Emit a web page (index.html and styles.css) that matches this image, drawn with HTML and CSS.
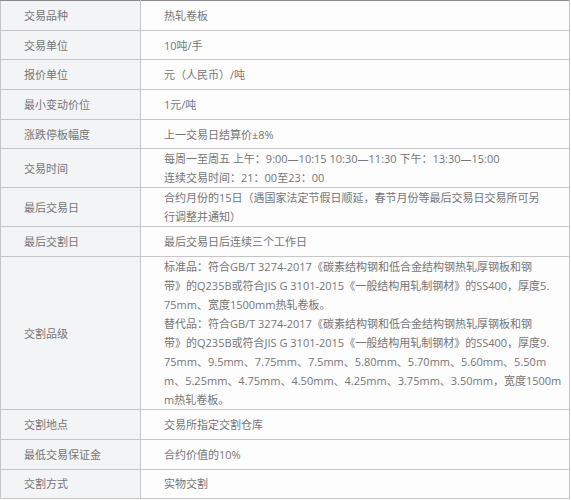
FILE: index.html
```html
<!DOCTYPE html>
<html lang="zh-CN">
<head>
<meta charset="utf-8">
<title>热轧卷板合约</title>
<link rel="stylesheet" href="styles.css">
</head>
<body>
<table class="spec">
  <tbody>
    <tr><th>交易品种</th><td>热轧卷板</td></tr>
    <tr><th>交易单位</th><td>10吨/手</td></tr>
    <tr><th>报价单位</th><td>元（人民币）/吨</td></tr>
    <tr><th>最小变动价位</th><td>1元/吨</td></tr>
    <tr><th>涨跌停板幅度</th><td>上一交易日结算价±8%</td></tr>
    <tr><th>交易时间</th><td>每周一至周五 上午：9:00—10:15 10:30—11:30 下午：13:30—15:00<br>连续交易时间：21：00至23：00</td></tr>
    <tr><th>最后交易日</th><td>合约月份的15日（遇国家法定节假日顺延，春节月份等最后交易日交易所可另<br>行调整并通知）</td></tr>
    <tr><th>最后交割日</th><td>最后交易日后连续三个工作日</td></tr>
    <tr><th>交割品级</th><td>标准品：符合GB/T 3274-2017《碳素结构钢和低合金结构钢热轧厚钢板和钢<br>带》的Q235B或符合JIS G 3101-2015《一般结构用轧制钢材》的SS400，厚度5.<br>75mm、宽度1500mm热轧卷板。<br>替代品：符合GB/T 3274-2017《碳素结构钢和低合金结构钢热轧厚钢板和钢<br>带》的Q235B或符合JIS G 3101-2015《一般结构用轧制钢材》的SS400，厚度9.<br>75mm、9.5mm、7.75mm、7.5mm、5.80mm、5.70mm、5.60mm、5.50m<br>m、5.25mm、4.75mm、4.50mm、4.25mm、3.75mm、3.50mm，宽度1500m<br>m热轧卷板。</td></tr>
    <tr><th>交割地点</th><td>交易所指定交割仓库</td></tr>
    <tr><th>最低交易保证金</th><td>合约价值的10%</td></tr>
    <tr><th>交割方式</th><td>实物交割</td></tr>
  </tbody>
</table>
</body>
</html>
```

FILE: styles.css
```css
html, body {
  margin: 0;
  padding: 0;
  background: #ffffff;
}

.spec {
  width: 570px;
  border-collapse: collapse;
  font-family: "Open Sans", "Noto Sans CJK SC", sans-serif;
  font-size: 11px;
  color: #767676;
}

.spec th,
.spec td {
  border: 1px solid #c6c6c6;
  height: 28.7px;
  padding: 0 0 0 23px;
  line-height: 19px;
  text-align: left;
  vertical-align: middle;
  font-weight: 400;
  white-space: nowrap;
}

.spec th {
  width: 116px;
  background: #f3f4f6;
}

.spec td {
  background: #fdfdfe;
}

.spec tr:first-child th,
.spec tr:first-child td {
  border-top-color: #8a8a8a;
}
```
